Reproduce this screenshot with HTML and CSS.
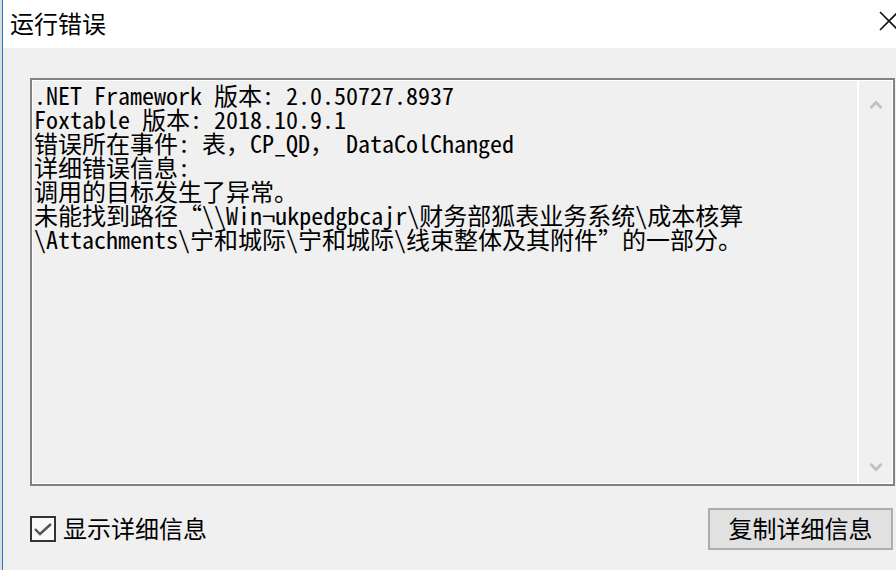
FILE: index.html
```html
<!DOCTYPE html>
<html lang="zh-CN">
<head>
    <meta charset="UTF-8">
    <title>运行错误</title>
    <link rel="stylesheet" href="styles.css">
</head>
<body>
    <div class="window">
        <div class="titlebar">
            <span class="title">运行错误</span>
            <span class="close">
                <svg width="20" height="20" viewBox="0 0 20 20"><path d="M1 1 L19 19 M19 1 L1 19" stroke="#111" stroke-width="1.6" fill="none"/></svg>
            </span>
        </div>

        <div class="content">
            <div class="textbox">
<pre class="message">.NET Framework 版本: 2.0.50727.8937
Foxtable 版本: 2018.10.9.1
错误所在事件: 表，CP_QD， DataColChanged
详细错误信息:
调用的目标发生了异常。
未能找到路径“\\Win¬ukpedgbcajr\财务部狐表业务系统\成本核算
\Attachments\宁和城际\宁和城际\线束整体及其附件”的一部分。</pre>
                <div class="scrollbar">
                    <svg width="14" height="9" viewBox="0 0 14 9"><polyline points="1.5,8 7,2.5 12.5,8" stroke="#c2c2c2" stroke-width="3" fill="none"/></svg>
                    <svg width="14" height="9" viewBox="0 0 14 9"><polyline points="1.5,1 7,6.5 12.5,1" stroke="#c2c2c2" stroke-width="3" fill="none"/></svg>
                </div>
            </div>

            <div class="footer">
                <label class="check">
                    <span class="box">
                        <svg width="22" height="22" viewBox="0 0 22 22"><polyline points="3,11 8,16 19,6" stroke="#555" stroke-width="2.4" fill="none"/></svg>
                    </span>
                    <span class="check-text">显示详细信息</span>
                </label>
                <button type="button" class="copy">复制详细信息</button>
            </div>
        </div>
    </div>
</body>
</html>
```

FILE: styles.css
```css
body {
    margin: 0;
    background: #dcdcdc;
    overflow: hidden;
}
.window {
    margin-left: 2px;
    width: 893px;
    height: 570px;
    border-left: 1px solid #1f7ad4;
    background: #f0f0f0;
    font-family: "Noto Sans CJK SC", sans-serif;
    color: #000;
}
.titlebar {
    height: 48px;
    background: #fff;
    display: flex;
    justify-content: space-between;
    align-items: center;
}
.title {
    padding-left: 7px;
    font-size: 24px;
    line-height: 48px;
    margin-top: -3px;
}
.close {
    width: 17px;
    height: 20px;
    overflow: hidden;
    margin-top: -7px;
}
.content {
    padding: 30px 0 0 27px;
}
.textbox {
    width: 861px;
    height: 404px;
    border: 2px solid #828282;
    box-shadow: inset 0 0 0 1px #fff;
    display: flex;
}
.message {
    flex: 1;
    margin: 0;
    padding: 3px 0 0 2px;
    font-family: "Noto Sans Mono CJK SC", "Liberation Mono", "Noto Sans CJK SC", monospace;
    font-size: 24px;
    line-height: 24px;
    white-space: pre;
    overflow: hidden;
}
.scrollbar {
    width: 33px;
    margin: 1px 1px 1px 0;
    border-left: 2px solid #fff;
    display: flex;
    flex-direction: column;
    justify-content: space-between;
    align-items: center;
    padding: 19px 0 11px;
}
.footer {
    display: flex;
    justify-content: space-between;
    align-items: center;
    padding: 22px 3px 0 0;
}
.check {
    display: flex;
    align-items: center;
    gap: 7px;
    font-size: 24px;
}
.check-text {
    padding-bottom: 3px;
}
.box {
    width: 22px;
    height: 22px;
    border: 2px solid #333;
    background: #fafafa;
}
.box svg {
    display: block;
}
.copy {
    width: 185px;
    height: 42px;
    border: 2px solid #adadad;
    background: #e1e1e1;
    font-family: "Noto Sans CJK SC", sans-serif;
    font-size: 24px;
    color: #000;
    padding: 0 0 6px;
}
```
